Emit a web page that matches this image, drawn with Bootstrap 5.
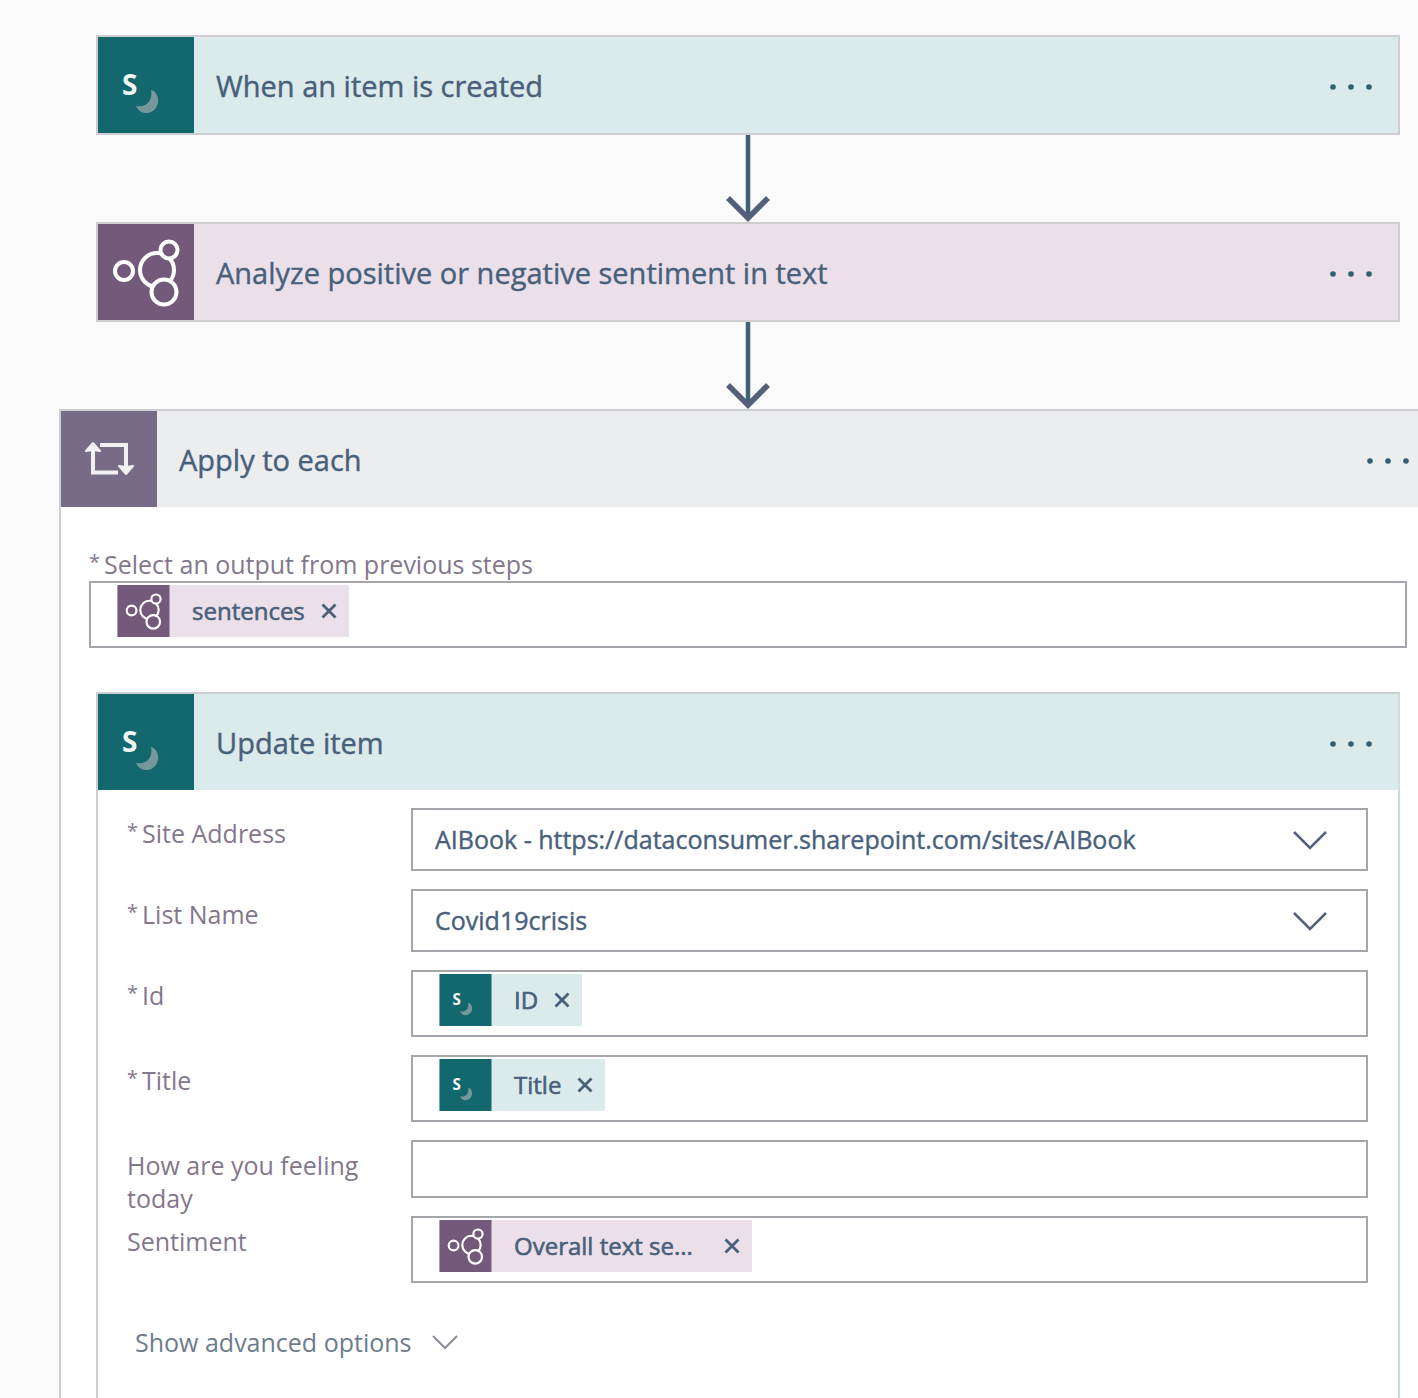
<!DOCTYPE html>
<html lang="en">
<head>
<meta charset="utf-8">
<meta name="viewport" content="width=device-width, initial-scale=1">
<title>Flow designer</title>
<link href="https://cdn.jsdelivr.net/npm/bootstrap@5.3.0/dist/css/bootstrap.min.css" rel="stylesheet">
<style>
:root { --ink: #48607a; --teal-soft: #dbeaea; --plum-soft: #ebe0ea; --edge: #cdcdd2; --field-edge: #a6a5ab; --label: #83778c; }
body { background: #fafafb; color: var(--ink); font-family: "Open Sans", "Noto Sans", sans-serif; overflow-x: hidden; }
.flow { margin: 0 -19px 0 59px; padding-top: 35px; }
.step { margin: 0 37px; border: 2px solid var(--edge); }
.step-head { height: 96px; font-size: 29px; }
.step-icon { width: 96px; height: 96px; }
.step-title { font-size: inherit; font-weight: 400; padding: 2px 0 0 22px; -webkit-text-stroke: 0.4px; }
.tone-teal { background: var(--teal-soft); }
.tone-plum { background: var(--plum-soft); }
.tone-grey { background: #ebedef; }
.dots-btn { padding: 32px 26px 28px; line-height: 0; }
.link-arrow { height: 87px; }
.loop { border: 2px solid var(--edge); border-bottom: 0; }
.loop-body { padding: 41px 28px 0; }
.flow-label { font-size: 25px; line-height: 33px; color: var(--label); }
.star { font-size: 20px; line-height: 0; vertical-align: 5px; margin-right: 4px; }
.token-field { border: 2px solid var(--field-edge); min-height: 67px; padding: 2px 26px 9px; }
.bare-input { min-width: 0; border: 0; background: transparent; outline: 0; }
.pill { height: 52px; font-size: 24px; padding-right: 12px; color: var(--ink); -webkit-text-stroke: 0.6px; }
.pill-icon { width: 53px; height: 52px; }
.pill-text { padding: 0 16px 0 22px; }
.pill-wide { min-width: 232px; }
.nested { margin: 44px 7px 0; border-bottom: 0; border-right-color: #cfdcde; }
.form-rows { padding: 18px 30px 0 29px; gap: 18px; }
.row-label { width: 284px; padding: 9px 36px 0 0; margin-bottom: -18px; }
.form-select.pick { height: 63px; border: 2px solid var(--field-edge); border-radius: 0; font-size: 25px; color: var(--ink); padding: 0 80px 0 22px; background-color: #fefefe; background-size: 36px 22px; background-position: right 38px center; -webkit-text-stroke: 0.4px;
  background-image: url("data:image/svg+xml,%3Csvg xmlns='http://www.w3.org/2000/svg' viewBox='0 0 36 22'%3E%3Cpath d='M2 3L18 19L34 3' fill='none' stroke='%2355607c' stroke-width='2.5'/%3E%3C/svg%3E"); }
.form-control.plain { height: 58px; border: 2px solid var(--field-edge); border-radius: 0; font-size: 25px; background: #fefefe; }
.advanced { margin: 43px 0 0 37px; font-size: 25px; line-height: 33px; color: #6c7c8c; gap: 20px; }
</style>
</head>
<body>
<svg class="d-none" aria-hidden="true">
  <symbol id="sharepoint" viewBox="0 0 96 96">
    <rect width="96" height="96" fill="#13686d"/>
    <text x="24" y="58" font-family="Open Sans, sans-serif" font-weight="700" font-size="28" fill="#f3f6f6">S</text>
    <path d="M53 53C58 54 61 60 60 66C58 74 52 76 48 76C43 76 40 73 38 69C48 71 55 64 53 53z" fill="#76989d"/>
  </symbol>
  <symbol id="analytics" viewBox="0 0 96 96">
    <rect width="96" height="96" fill="#745a7a"/>
    <g fill="#745a7a" stroke="#fff" stroke-width="4">
      <circle cx="26" cy="47" r="9"/><circle cx="59" cy="46" r="17"/>
      <circle cx="71" cy="26" r="8.5"/><circle cx="66" cy="68" r="12.5"/>
    </g>
  </symbol>
  <symbol id="repeat" viewBox="0 0 96 96">
    <rect width="96" height="96" fill="#766c86"/>
    <path d="M32 38V61.500H57M39 34H65V57" fill="none" stroke="#f1f1f3" stroke-width="4"/>
    <path d="M32 32L39 40L32 39L25 40zM65 63L58 55L65 56L72 55z" fill="#f1f1f3" stroke="#f1f1f3" stroke-width="2" stroke-linejoin="round"/>
  </symbol>
  <symbol id="dots" viewBox="0 0 42 6"><g fill="#2f5f70"><circle cx="3" cy="3" r="2.800"/><circle cx="21" cy="3" r="2.800"/><circle cx="39" cy="3" r="2.800"/></g></symbol>
  <symbol id="cross" viewBox="0 0 16 16"><path d="M1.500 1.500L14.500 14.500M14.500 1.500L1.500 14.500" stroke="#48607a" stroke-width="2.800"/></symbol>
  <symbol id="arrow" viewBox="0 0 44 87"><path d="M22 0V83" stroke="#3f6076" stroke-width="4.500"/><path d="M2 63L22 83L42 63" fill="none" stroke="#54607a" stroke-width="5.500"/></symbol>
</svg>

<main class="flow d-flex flex-column min-vh-100">
  <section class="step">
    <div class="step-head tone-teal d-flex align-items-center">
      <svg class="step-icon flex-shrink-0"><use href="#sharepoint"/></svg>
      <h2 class="step-title mb-0 flex-grow-1">When an item is created</h2>
      <button type="button" class="btn border-0 dots-btn" aria-label="More"><svg width="42" height="6"><use href="#dots"/></svg></button>
    </div>
  </section>
  <div class="link-arrow text-center lh-1"><svg width="44" height="87"><use href="#arrow"/></svg></div>
  <section class="step">
    <div class="step-head tone-plum d-flex align-items-center">
      <svg class="step-icon flex-shrink-0"><use href="#analytics"/></svg>
      <h2 class="step-title mb-0 flex-grow-1">Analyze positive or negative sentiment in text</h2>
      <button type="button" class="btn border-0 dots-btn" aria-label="More"><svg width="42" height="6"><use href="#dots"/></svg></button>
    </div>
  </section>
  <div class="link-arrow text-center lh-1"><svg width="44" height="87"><use href="#arrow"/></svg></div>

  <section class="loop bg-white d-flex flex-column flex-grow-1">
    <div class="step-head tone-grey d-flex align-items-center">
      <svg class="step-icon flex-shrink-0"><use href="#repeat"/></svg>
      <h2 class="step-title mb-0 flex-grow-1">Apply to each</h2>
      <button type="button" class="btn border-0 dots-btn" aria-label="More"><svg width="42" height="6"><use href="#dots"/></svg></button>
    </div>
    <div class="loop-body d-flex flex-column flex-grow-1">
      <label class="flow-label" for="output"><span class="star">*</span>Select an output from previous steps</label>
      <div class="token-field d-flex">
        <span class="pill tone-plum d-inline-flex align-items-center">
          <svg class="pill-icon"><use href="#analytics"/></svg>
          <span class="pill-text">sentences</span>
          <button type="button" class="btn border-0 p-0 lh-1 d-flex" aria-label="Remove"><svg width="16" height="16"><use href="#cross"/></svg></button>
        </span>
        <input id="output" class="bare-input flex-grow-1" type="text">
      </div>

      <section class="step nested d-flex flex-column flex-grow-1">
        <div class="step-head tone-teal d-flex align-items-center">
          <svg class="step-icon flex-shrink-0"><use href="#sharepoint"/></svg>
          <h2 class="step-title mb-0 flex-grow-1">Update item</h2>
          <button type="button" class="btn border-0 dots-btn" aria-label="More"><svg width="42" height="6"><use href="#dots"/></svg></button>
        </div>
        <form class="form-rows d-flex flex-column">
          <div class="d-flex">
            <label class="flow-label row-label flex-shrink-0" for="site"><span class="star">*</span>Site Address</label>
            <select id="site" class="form-select pick"><option>AIBook - https://dataconsumer.sharepoint.com/sites/AIBook</option></select>
          </div>
          <div class="d-flex">
            <label class="flow-label row-label flex-shrink-0" for="list"><span class="star">*</span>List Name</label>
            <select id="list" class="form-select pick"><option>Covid19crisis</option></select>
          </div>
          <div class="d-flex">
            <label class="flow-label row-label flex-shrink-0" for="item-id"><span class="star">*</span>Id</label>
            <div class="token-field d-flex flex-grow-1">
              <span class="pill tone-teal d-inline-flex align-items-center">
                <svg class="pill-icon"><use href="#sharepoint"/></svg>
                <span class="pill-text">ID</span>
                <button type="button" class="btn border-0 p-0 lh-1 d-flex" aria-label="Remove"><svg width="16" height="16"><use href="#cross"/></svg></button>
              </span>
              <input id="item-id" class="bare-input flex-grow-1" type="text">
            </div>
          </div>
          <div class="d-flex">
            <label class="flow-label row-label flex-shrink-0" for="item-title"><span class="star">*</span>Title</label>
            <div class="token-field d-flex flex-grow-1">
              <span class="pill tone-teal d-inline-flex align-items-center">
                <svg class="pill-icon"><use href="#sharepoint"/></svg>
                <span class="pill-text">Title</span>
                <button type="button" class="btn border-0 p-0 lh-1 d-flex" aria-label="Remove"><svg width="16" height="16"><use href="#cross"/></svg></button>
              </span>
              <input id="item-title" class="bare-input flex-grow-1" type="text">
            </div>
          </div>
          <div class="d-flex">
            <label class="flow-label row-label flex-shrink-0" for="feeling">How are you feeling today</label>
            <input id="feeling" class="form-control plain" type="text">
          </div>
          <div class="d-flex">
            <label class="flow-label row-label flex-shrink-0" for="sentiment">Sentiment</label>
            <div class="token-field d-flex flex-grow-1">
              <span class="pill tone-plum d-inline-flex align-items-center">
                <svg class="pill-icon"><use href="#analytics"/></svg>
                <span class="pill-text pill-wide">Overall text se...</span>
                <button type="button" class="btn border-0 p-0 lh-1 d-flex" aria-label="Remove"><svg width="16" height="16"><use href="#cross"/></svg></button>
              </span>
              <input id="sentiment" class="bare-input flex-grow-1" type="text">
            </div>
          </div>
        </form>
        <button type="button" class="btn border-0 p-0 advanced d-flex align-items-center align-self-start">Show advanced options
          <svg width="26" height="16" viewBox="0 0 26 16"><path d="M1 1L13 13L25 1" fill="none" stroke="#8b8c98" stroke-width="2"/></svg>
        </button>
      </section>
    </div>
  </section>
</main>
<script src="https://cdn.jsdelivr.net/npm/bootstrap@5.3.0/dist/js/bootstrap.bundle.min.js"></script>
</body>
</html>
